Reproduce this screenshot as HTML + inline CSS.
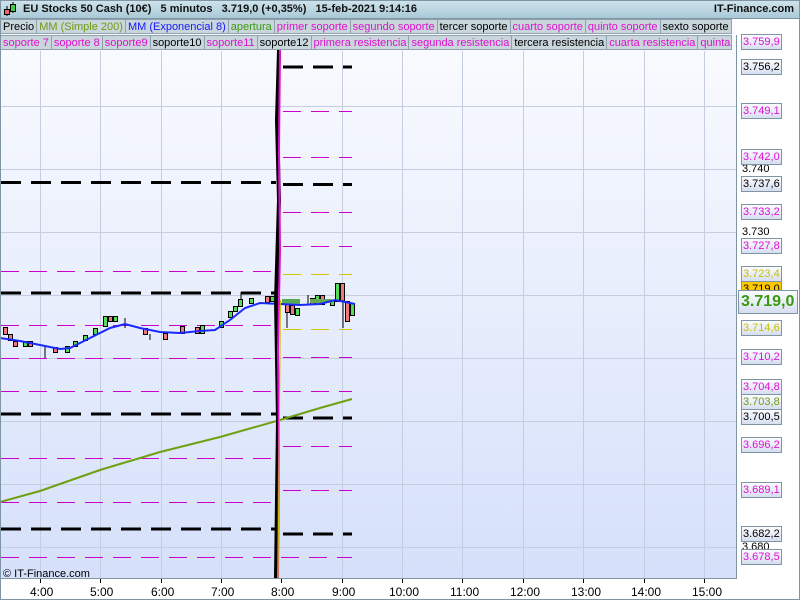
<!DOCTYPE html>
<html><head><meta charset="utf-8"><style>
body{margin:0;width:800px;height:600px;overflow:hidden;font-family:"Liberation Sans",sans-serif;background:#fff;position:relative}
.hdr{position:absolute;left:0;top:0;width:800px;height:18px;background:linear-gradient(#d0e4ec,#a9c9d7);border-bottom:1px solid #7f95a3;font-size:11px;font-weight:bold;color:#111}
.row{position:absolute;left:0;height:16px;font-size:11px;white-space:nowrap;display:flex}
.row span{display:block;height:15px;line-height:15px;padding:0 2px;background:#c9d6dc;border:1px solid #8fa2ad;border-left:none;box-sizing:border-box}
.m{color:#e010d0}.k{color:#000}
.lab{position:absolute;left:741px;width:41px;height:16px;box-sizing:border-box;border:1px solid #7f95a3;background:linear-gradient(#fbfcff,#d6def0);font-size:11px;line-height:14px;padding-left:1px}
.t{position:absolute;top:585px;font-size:12px;color:#000}
</style></head><body>
<div class="hdr">
<svg style="position:absolute;left:3px;top:2px" width="14" height="15"><line x1="4" y1="4" x2="4" y2="14" stroke="#000"/><rect x="1.5" y="7.5" width="5" height="5" fill="#e66" stroke="#000"/><line x1="10" y1="0" x2="10" y2="11" stroke="#000"/><rect x="7.5" y="2.5" width="5" height="7" fill="#4c4" stroke="#000"/></svg>
<span style="position:absolute;left:23px;top:3px">EU Stocks 50 Cash (10€)&nbsp;&nbsp;&nbsp;5 minutos&nbsp;&nbsp;&nbsp;3.719,0 (+0,35%)&nbsp;&nbsp;&nbsp;15-feb-2021 9:14:16</span>
<span style="position:absolute;right:6px;top:3px">IT-Finance.com</span>
</div>
<div style="position:absolute;left:0;top:19px;width:736px;height:559px;background:linear-gradient(#fbfcff,#d5e0fa)"></div>
<div class="row" style="top:19px"><span class="k" style="border-left:1px solid #8fa2ad">Precio</span><span style="color:#6e9a10">MM (Simple 200)</span><span style="color:#1818ff">MM (Exponencial 8)</span><span style="color:#3a9a10">apertura</span><span class="m">primer soporte</span><span class="m">segundo soporte</span><span class="k">tercer soporte</span><span class="m">cuarto soporte</span><span class="m">quinto soporte</span><span class="k">sexto soporte</span></div>
<div class="row" style="top:35px"><span class="m" style="border-left:1px solid #8fa2ad">soporte 7</span><span class="m">soporte 8</span><span class="m">soporte9</span><span class="k">soporte10</span><span class="m">soporte11</span><span class="k">soporte12</span><span class="m">primera resistencia</span><span class="m">segunda resistencia</span><span class="k">tercera resistencia</span><span class="m">cuarta resistencia</span><span class="m" style="width:34px;overflow:hidden">quinta resistencia</span></div>
<svg style="position:absolute;left:0;top:0" width="800" height="600">
<g stroke="#c5cde0" stroke-width="1">
<line x1="40.5" y1="51" x2="40.5" y2="578"/><line x1="100.5" y1="51" x2="100.5" y2="578"/><line x1="161.5" y1="51" x2="161.5" y2="578"/><line x1="221.5" y1="51" x2="221.5" y2="578"/><line x1="342.5" y1="51" x2="342.5" y2="578"/><line x1="402.5" y1="51" x2="402.5" y2="578"/><line x1="462.5" y1="51" x2="462.5" y2="578"/><line x1="523.5" y1="51" x2="523.5" y2="578"/><line x1="583.5" y1="51" x2="583.5" y2="578"/><line x1="644.5" y1="51" x2="644.5" y2="578"/><line x1="704.5" y1="51" x2="704.5" y2="578"/>
<line x1="0" y1="106.5" x2="736" y2="106.5"/><line x1="0" y1="169.5" x2="736" y2="169.5"/><line x1="0" y1="232.5" x2="736" y2="232.5"/><line x1="0" y1="295.5" x2="736" y2="295.5"/><line x1="0" y1="358.5" x2="736" y2="358.5"/><line x1="0" y1="421.5" x2="736" y2="421.5"/><line x1="0" y1="484.5" x2="736" y2="484.5"/><line x1="0" y1="547.5" x2="736" y2="547.5"/>
</g>
<line x1="0.5" y1="50" x2="0.5" y2="578" stroke="#7f95a3"/>
<g stroke="#000" stroke-width="3" stroke-dasharray="20,10">
<line x1="1" y1="182.5" x2="276" y2="182.5"/><line x1="1" y1="293" x2="276" y2="293"/><line x1="1" y1="414" x2="276" y2="414"/><line x1="1" y1="529" x2="276" y2="529"/>
<line x1="283" y1="67" x2="352" y2="67"/><line x1="283" y1="184.5" x2="352" y2="184.5"/><line x1="283" y1="418" x2="352" y2="418"/><line x1="283" y1="534" x2="352" y2="534"/>
</g>
<g stroke="#cc00cc" stroke-width="1" stroke-dasharray="18,10">
<line x1="1" y1="271.5" x2="276" y2="271.5"/><line x1="1" y1="325.5" x2="276" y2="325.5"/><line x1="1" y1="358.5" x2="276" y2="358.5"/><line x1="1" y1="391.5" x2="276" y2="391.5"/><line x1="1" y1="458.5" x2="276" y2="458.5"/><line x1="1" y1="502.5" x2="276" y2="502.5"/><line x1="1" y1="557.5" x2="352" y2="557.5"/>
<line x1="283" y1="111.5" x2="352" y2="111.5"/><line x1="283" y1="157.5" x2="352" y2="157.5"/><line x1="283" y1="212.5" x2="352" y2="212.5"/><line x1="283" y1="246.5" x2="352" y2="246.5"/><line x1="283" y1="357.5" x2="352" y2="357.5"/><line x1="283" y1="391.5" x2="352" y2="391.5"/><line x1="283" y1="446.5" x2="352" y2="446.5"/><line x1="283" y1="490.5" x2="352" y2="490.5"/>
</g>
<g stroke="#d0c800" stroke-width="1" stroke-dasharray="18,10"><line x1="283" y1="274.5" x2="352" y2="274.5"/><line x1="283" y1="329.5" x2="352" y2="329.5"/></g>
<polyline points="0,502 40,491 100,470 160,452 220,437 280,420 320,408 352,399" fill="none" stroke="#70a010" stroke-width="2"/>
<g stroke="#000" stroke-width="1">
<rect x="3.5" y="327.5" width="4" height="7" fill="#e77"/><rect x="8.5" y="334.5" width="4" height="6" fill="#e77"/><rect x="13.5" y="341.5" width="4" height="5" fill="#e77"/><rect x="23.5" y="341.5" width="4" height="5" fill="#5d5"/><rect x="28.5" y="341.5" width="4" height="5" fill="#e77"/>
<line x1="45" y1="346" x2="45" y2="358"/><rect x="53.5" y="347.5" width="4" height="5" fill="#e77"/><rect x="65.5" y="346.5" width="4" height="6" fill="#5d5"/><rect x="73.5" y="341.5" width="4" height="5" fill="#5d5"/><rect x="83.5" y="335.5" width="4" height="5" fill="#5d5"/><rect x="93.5" y="328.5" width="4" height="6" fill="#5d5"/><rect x="103.5" y="316.5" width="4" height="10" fill="#5d5"/><rect x="108.5" y="316.5" width="4" height="5" fill="#e77"/><rect x="113.5" y="316.5" width="4" height="5" fill="#5d5"/>
<line x1="125" y1="318" x2="125" y2="328"/><rect x="143.5" y="328.5" width="4" height="6" fill="#e77"/><line x1="150" y1="334" x2="150" y2="340"/><rect x="163.5" y="333.5" width="4" height="6" fill="#e77"/><rect x="180.5" y="326.5" width="4" height="7" fill="#e77"/><rect x="195.5" y="327.5" width="4" height="6" fill="#e77"/><rect x="200.5" y="325.5" width="4" height="8" fill="#5d5"/><rect x="219.5" y="321.5" width="4" height="6" fill="#5d5"/><rect x="228.5" y="311.5" width="4" height="6" fill="#5d5"/><rect x="233.5" y="306.5" width="4" height="5" fill="#5d5"/><rect x="238.5" y="299.5" width="4" height="7" fill="#5d5"/><line x1="241" y1="292" x2="241" y2="300"/><rect x="249.5" y="298.5" width="4" height="5" fill="#5d5"/><rect x="265.5" y="296.5" width="4" height="6" fill="#e77"/><rect x="270.5" y="296.5" width="4" height="5" fill="#5d5"/>
<rect x="285.5" y="302.5" width="4" height="10" fill="#e77"/><line x1="287" y1="312" x2="287" y2="328"/><rect x="290.5" y="305.5" width="4" height="9" fill="#e77"/><rect x="295.5" y="308.5" width="4" height="7" fill="#5d5"/><line x1="308" y1="295" x2="308" y2="305"/><rect x="310.5" y="298.5" width="4" height="6" fill="#e77"/><rect x="315.5" y="295.5" width="4" height="9" fill="#5d5"/><rect x="320.5" y="295.5" width="4" height="9" fill="#e77"/><rect x="330.5" y="300.5" width="4" height="5" fill="#5d5"/><rect x="335.5" y="283.5" width="4" height="18" fill="#5d5"/><rect x="340.5" y="283.5" width="4" height="18" fill="#e77"/><line x1="343" y1="300" x2="343" y2="328"/><rect x="345.5" y="301.5" width="4" height="20" fill="#e77"/><rect x="350.5" y="303.5" width="4" height="12" fill="#5d5"/>
</g>
<rect x="282" y="299" width="18" height="5" fill="#5a5"/><rect x="310" y="299" width="22" height="4" fill="#6a5"/>
<polyline points="0,338 20,341 40,345 60,349 70,348 90,338 110,328 125,324 140,328 160,332 180,333 200,331 215,330 230,320 245,308 260,303 280,304 300,305 320,304 335,300 345,302 355,304" fill="none" stroke="#1a2aff" stroke-width="2"/>
<path d="M279 50 L277 120 L279 200 L276 300 L278 420 L276 578" stroke="#000" stroke-width="4" fill="none"/>
<path d="M280 50 L279 150 L280 250 L278 350 L279 450 L278 578" stroke="#e010d0" stroke-width="2" fill="none"/>
<line x1="280.5" y1="300" x2="278" y2="578" stroke="#c8c000" stroke-width="1"/>
<line x1="0" y1="578.5" x2="736" y2="578.5" stroke="#7f95a3"/>
<line x1="736.5" y1="35" x2="736.5" y2="579" stroke="#7f95a3"/>
<rect x="0.5" y="0.5" width="799" height="599" fill="none" stroke="#7f95a3"/>
<g stroke="#000"><line x1="40.5" y1="579" x2="40.5" y2="583"/><line x1="100.5" y1="579" x2="100.5" y2="583"/><line x1="161.5" y1="579" x2="161.5" y2="583"/><line x1="221.5" y1="579" x2="221.5" y2="583"/><line x1="281.5" y1="579" x2="281.5" y2="583"/><line x1="342.5" y1="579" x2="342.5" y2="583"/><line x1="402.5" y1="579" x2="402.5" y2="583"/><line x1="462.5" y1="579" x2="462.5" y2="583"/><line x1="523.5" y1="579" x2="523.5" y2="583"/><line x1="583.5" y1="579" x2="583.5" y2="583"/><line x1="644.5" y1="579" x2="644.5" y2="583"/><line x1="704.5" y1="579" x2="704.5" y2="583"/></g>
</svg>
<div style="position:absolute;left:3px;top:568px;font-size:11px">© IT-Finance.com</div>
<div class="t" style="left:30px">4:00</div><div class="t" style="left:90px">5:00</div><div class="t" style="left:151px">6:00</div><div class="t" style="left:211px">7:00</div><div class="t" style="left:271px">8:00</div><div class="t" style="left:332px">9:00</div><div class="t" style="left:389px">10:00</div><div class="t" style="left:450px">11:00</div><div class="t" style="left:510px">12:00</div><div class="t" style="left:571px">13:00</div><div class="t" style="left:631px">14:00</div><div class="t" style="left:692px">15:00</div>
<div style="position:absolute;left:742px;top:163px;font-size:11px">3.740</div>
<div style="position:absolute;left:742px;top:226px;font-size:11px">3.730</div>
<div style="position:absolute;left:742px;top:541px;font-size:11px">3.680</div>
<div class="lab m" style="top:34px">3.759,9</div>
<div class="lab" style="top:59px">3.756,2</div>
<div class="lab m" style="top:103px">3.749,1</div>
<div class="lab m" style="top:149px">3.742,0</div>
<div class="lab" style="top:176px">3.737,6</div>
<div class="lab m" style="top:204px">3.733,2</div>
<div class="lab m" style="top:238px">3.727,8</div>
<div class="lab" style="top:266px;color:#c8c000">3.723,4</div>
<div class="lab" style="top:281px;background:#ffc800">3.719,0</div>
<div class="lab" style="top:320px;color:#c8c000">3.714,6</div>
<div class="lab m" style="top:349px">3.710,2</div>
<div class="lab m" style="top:379px">3.704,8</div>
<div class="lab" style="top:394px;color:#6e9a10">3.703,8</div>
<div class="lab" style="top:409px">3.700,5</div>
<div class="lab m" style="top:437px">3.696,2</div>
<div class="lab m" style="top:482px">3.689,1</div>
<div class="lab" style="top:526px">3.682,2</div>
<div class="lab m" style="top:549px">3.678,5</div>
<div style="position:absolute;left:738px;top:290px;width:60px;height:24px;box-sizing:border-box;border:1px solid #7f95a3;background:linear-gradient(#fbfcff,#d6def0);color:#3a9a10;font-weight:bold;font-size:16px;line-height:22px;padding-left:2px">3.719,0</div>
</body></html>
